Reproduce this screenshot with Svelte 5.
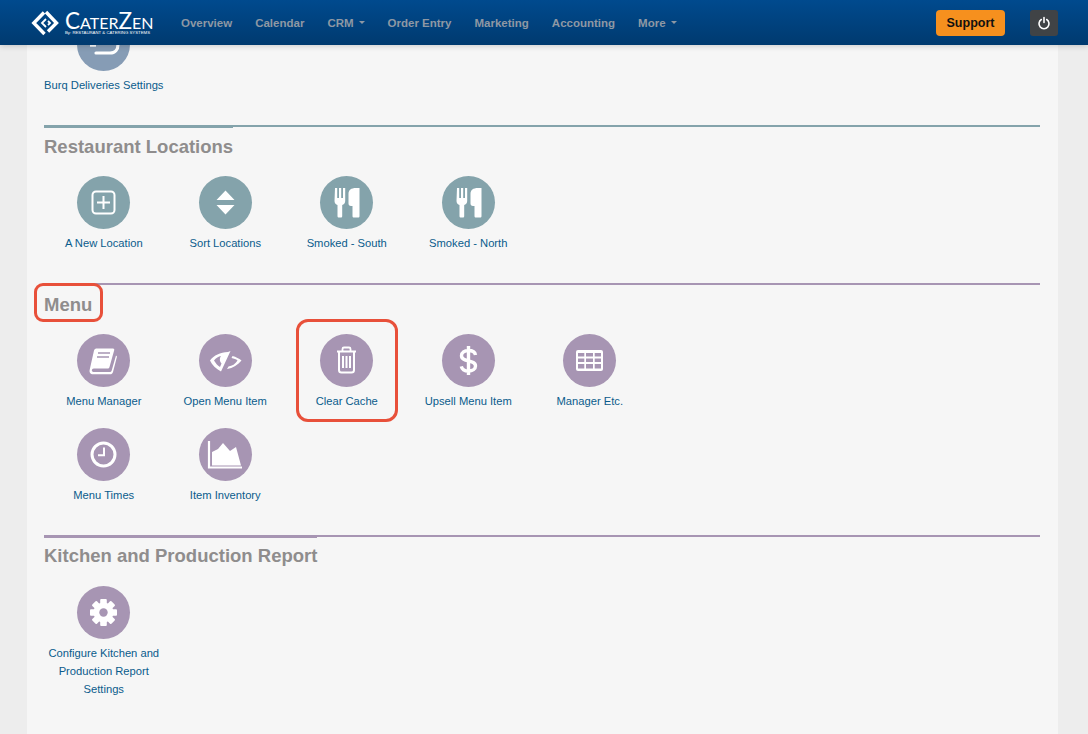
<script>
  const nav = [
    { t: 'Overview' }, { t: 'Calendar' }, { t: 'CRM', caret: true }, { t: 'Order Entry' },
    { t: 'Marketing' }, { t: 'Accounting' }, { t: 'More', caret: true }
  ];
  const locations = [
    { label: 'A New Location', icon: 'plus' }, { label: 'Sort Locations', icon: 'sort' },
    { label: 'Smoked - South', icon: 'food' }, { label: 'Smoked - North', icon: 'food' }
  ];
  const menu = [
    { label: 'Menu Manager', icon: 'book' }, { label: 'Open Menu Item', icon: 'eye' },
    { label: 'Clear Cache', icon: 'trash', mark: true }, { label: 'Upsell Menu Item', icon: 'dollar' },
    { label: 'Manager Etc.', icon: 'table' }, { label: 'Menu Times', icon: 'clock' },
    { label: 'Item Inventory', icon: 'chart' }
  ];
  const kitchen = [{ label: 'Configure Kitchen and Production Report Settings', icon: 'gear' }];
  const sections = [
    { title: 'Restaurant Locations', tone: 'teal', items: locations },
    { title: 'Menu', tone: 'purple', items: menu, mark: true },
    { title: 'Kitchen and Production Report', tone: 'purple', items: kitchen }
  ];
  const teeth = [0, 45, 90, 135, 180, 225, 270, 315];
</script>

{#snippet icon(name)}
  <svg viewBox="0 0 53 53" width="53" height="53" aria-hidden="true">
    {#if name === 'burq'}
      <path d="M19 35h14c5 0 8-3.500 8-8.500" fill="none" stroke="#fff" stroke-width="3.200" stroke-linecap="round"/>
      <path d="M13 26.500h6v2.200h-6z" fill="#fff"/>
    {:else if name === 'plus'}
      <rect x="15.500" y="15.500" width="22" height="22" rx="3.500" fill="none" stroke="#fff" stroke-width="2"/>
      <path d="M26.500 20v13M20 26.500h13" stroke="#fff" stroke-width="2"/>
    {:else if name === 'sort'}
      <path d="M26.500 14.500 35.500 24h-18zM26.500 38.500 17.500 29h18z" fill="#fff"/>
    {:else if name === 'food'}
      <path d="M15 12h2.200v10H19V12h2.200v10H23V12h2.200v13c0 2.500-1.500 3.500-3 4v11c0 1-.5 1.500-1.500 1.500h-1.700c-1 0-1.500-.5-1.500-1.500V29c-1.500-.5-3-1.500-3-4z" fill="#fff"/>
      <path d="M28.500 18c0-4 2.500-6 7.500-6h3.500v28c0 1-.5 1.500-1.500 1.500h-4c-1 0-1.500-.5-1.500-1.500V30H31c-1.700 0-2.500-1-2.500-2.500z" fill="#fff"/>
    {:else if name === 'book'}
      <path d="M17 16.500c.5-1.500 1.500-2 3-2h16c1 0 1.500 .8 1.200 1.800L32.500 33c-.3 1-1 1.500-2 1.500H17c-2 0-2.500 1.500-2 2.500.4.800 1 1 2 1h15.500c1 0 1.800-.5 2.200-1.500l4.300-15 1 1-4 15.500c-.5 1.500-1.500 2.300-3 2.300H16c-2.500 0-4-2-3.300-4.500z" fill="#fff"/>
      <path d="M21 19h12M20 23h12" stroke="#a795b3" stroke-width="1.600"/>
    {:else if name === 'eye'}
      <path fill-rule="evenodd" fill="#fff" d="M11 26.500C15 21 21 18.500 29 18l2.500-1L22 37.500C17 35 13 31 11 26.500zM15 26.500C17 24 19.500 22.500 22 22c-2 3-1 6 .5 7.500L21 33c-2.500-1.500-4.500-4-6-6.500z"/>
      <path fill="#fff" d="M33.500 22c3.500 1 6.500 2.500 9 4.500C39 31 34 34 28 35l1.500-2.500c3.500-.5 7-2.500 9-6-1.500-1.500-3.500-2-6-2.500z"/>
    {:else if name === 'trash'}
      <path d="M17 17.500h19M22.500 17v-2c0-1 .5-1.500 1.500-1.500h5c1 0 1.500 .5 1.500 1.500v2" fill="none" stroke="#fff" stroke-width="1.800"/>
      <path d="M19 18v18c0 1.500 1 2.500 2.500 2.500h10c1.500 0 2.500-1 2.500-2.500V18" fill="none" stroke="#fff" stroke-width="2"/>
      <path d="M23 22v12M26.500 22v12M30 22v12" stroke="#fff" stroke-width="2"/>
    {:else if name === 'dollar'}
      <path d="M33.500 21c-.5-3-3.500-4.500-7-4.500-4 0-7 2-7 5.200 0 7 14 3.500 14 10.300 0 3.200-3 5-7 5-3.700 0-6.500-1.600-7.200-4.700M26.500 12v29" fill="none" stroke="#fff" stroke-width="3.400"/>
    {:else if name === 'table'}
      <rect x="13" y="16" width="27" height="21" rx="2" fill="#fff"/>
      <path fill="#a795b3" d="M15 19h6.300v3.500H15zM23 19h7v3.500h-7zM31.700 19H38v3.500h-6.300zM15 24.500h6.300V28H15zM23 24.500h7V28h-7zM31.700 24.500H38V28h-6.300zM15 30h6.300v4.500H15zM23 30h7v4.500h-7zM31.700 30H38v4.500h-6.300z"/>
    {:else if name === 'clock'}
      <circle cx="26.500" cy="26.500" r="11.500" fill="none" stroke="#fff" stroke-width="3"/>
      <path d="M27 19.500v7.800h-6" fill="none" stroke="#fff" stroke-width="2"/>
    {:else if name === 'chart'}
      <path d="M10 13v26.500h33" fill="none" stroke="#fff" stroke-width="2.200"/>
      <path d="M13 37.500V24l6-3 5-6 7 8 6-4 5 18.500z" fill="#fff"/>
    {:else if name === 'gear'}
      <circle cx="26.500" cy="26.500" r="10" fill="#fff"/>
      {#each teeth as a}
        <rect x="23.200" y="13" width="6.600" height="6" rx="1" fill="#fff" transform="rotate({a} 26.500 26.500)"/>
      {/each}
      <circle cx="26.500" cy="26.500" r="4.200" fill="#a795b3"/>
    {/if}
  </svg>
{/snippet}

{#snippet tile(item, tone)}
  <a class="tile" class:mark={item.mark} href="#top">
    <span class="disc {tone}">{@render icon(item.icon)}</span>
    <span class="label">{item.label}</span>
  </a>
{/snippet}

<header class="bar">
  <a class="logo" href="#top">
    <svg viewBox="0 0 28 28" width="28" height="28" aria-hidden="true">
      <path d="M13 3.500 2.800 14 13.500 25M15 3 25.500 14l-8.500 8.500" fill="none" stroke="#fff" stroke-width="3.400"/>
      <path d="M15 10 11 14l4 4M17 12l2 2-2 2" fill="none" stroke="#fff" stroke-width="1.800"/>
    </svg>
    <span class="brand">
      <span class="name">CaterZen</span>
      <span class="sub">By: RESTAURANT &amp; CATERING SYSTEMS</span>
    </span>
  </a>
  <nav class="nav">
    {#each nav as n}
      <a href="#top">{n.t}{#if n.caret}<i class="caret"></i>{/if}</a>
    {/each}
  </nav>
  <button class="support">Support</button>
  <button class="power" aria-label="Power">
    <svg viewBox="0 0 14 14" width="14" height="14"><path d="M4.300 3.500a5 5 0 1 0 5.400 0M7 1.500v5" fill="none" stroke="#fff" stroke-width="1.600" stroke-linecap="round"/></svg>
  </button>
</header>

<main class="card">
  <div class="row first">
    <a class="tile" href="#top">
      <span class="disc blue">{@render icon('burq')}</span>
      <span class="label nowrap">Burq Deliveries Settings</span>
    </a>
  </div>
  {#each sections as s}
    <section class="section {s.tone}-line">
      <h2 class:mark={s.mark}>{s.title}</h2>
      <div class="row">
        {#each s.items as item}
          {@render tile(item, s.tone)}
        {/each}
      </div>
    </section>
  {/each}
</main>

<style>
  :global(body) {
    margin: 0;
    background: #ededed;
    font-family: "Liberation Sans", Arial, sans-serif;
    overflow: hidden;
  }
  .bar {
    position: absolute;
    z-index: 2;
    top: 0; left: 0; right: 0;
    height: 45px;
    box-sizing: border-box;
    display: flex;
    align-items: center;
    padding-left: 31px;
    background: linear-gradient(#004a8e, #003a6f);
    box-shadow: 0 1px 6px rgba(0,0,0,.18);
  }
  .logo { display: flex; align-items: center; gap: 6px; text-decoration: none; color: #fff; width: 150px; }
  .brand { display: flex; flex-direction: column; }
  .name {
    font-family: Lato, sans-serif;
    font-variant: small-caps;
    font-size: 22.500px;
    font-weight: 400;
    line-height: 19px;
  }
  .sub { font-size: 4.300px; line-height: 5px; white-space: nowrap; }
  .nav { display: flex; gap: 23px; flex: 1; }
  .nav a {
    color: #8e98a4;
    font-size: 11.500px;
    font-weight: 700;
    text-decoration: none;
    display: flex;
    align-items: center;
  }
  .caret {
    display: block;
    margin-left: 5px;
    border: 3px solid transparent;
    border-top-color: #8e98a4;
    border-bottom: 0;
  }
  .support {
    width: 69px;
    height: 26px;
    padding: 0;
    border: 0;
    border-radius: 4px;
    background: #f6901e;
    color: #111;
    font: 700 12.500px "Liberation Sans", Arial, sans-serif;
    margin-right: 25px;
  }
  .power {
    width: 28px;
    height: 26px;
    padding: 0;
    border: 0;
    border-radius: 3px;
    background: #404346;
    margin-right: 30px;
    display: grid;
    place-items: center;
  }
  .card {
    margin-left: 27px;
    width: 1031px;
    height: 734px;
    box-sizing: border-box;
    padding: 18px 18px 0 17px;
    background: #f6f6f6;
    overflow: hidden;
  }
  .section { border-top: 2px solid; margin-top: 13.500px; }
  .teal-line { border-color: #84a3ab; }
  .purple-line { border-color: #a795b3; }
  h2 {
    display: block;
    width: fit-content;
    margin: -2px 0 17.500px;
    border-top: 3px solid;
    border-color: inherit;
    padding-top: 6.500px;
    color: #8f8d8d;
    font-size: 18.500px;
    font-weight: 700;
    line-height: 24px;
    position: relative;
  }
  .row { display: flex; flex-wrap: wrap; width: 610px; margin-left: -1px; }
  .tile {
    width: 121.500px;
    box-sizing: border-box;
    padding: 0 4px;
    margin-bottom: 17.500px;
    display: flex;
    flex-direction: column;
    align-items: center;
    text-decoration: none;
    position: relative;
  }
  .disc {
    width: 53px;
    height: 53px;
    border-radius: 50%;
    display: block;
  }
  .disc svg { display: block; }
  .blue { background: #869cb5; }
  .teal { background: #84a3ab; }
  .purple { background: #a795b3; }
  .label {
    margin-top: 5px;
    color: #0a5c8c;
    font-size: 11.200px;
    line-height: 18px;
    text-align: center;
  }
  .nowrap { white-space: nowrap; }
  .tile.mark::after {
    content: "";
    position: absolute;
    left: 9.500px; right: 9.500px; top: -15px; bottom: -12px;
    border: 3px solid #e8503a;
    border-radius: 12px;
  }
  h2.mark { border-top-color: transparent; }
  h2.mark::after {
    content: "";
    position: absolute;
    left: -10px; right: -11px; top: -3px; bottom: -5px;
    border: 3px solid #e8503a;
    border-radius: 9px;
  }
</style>
